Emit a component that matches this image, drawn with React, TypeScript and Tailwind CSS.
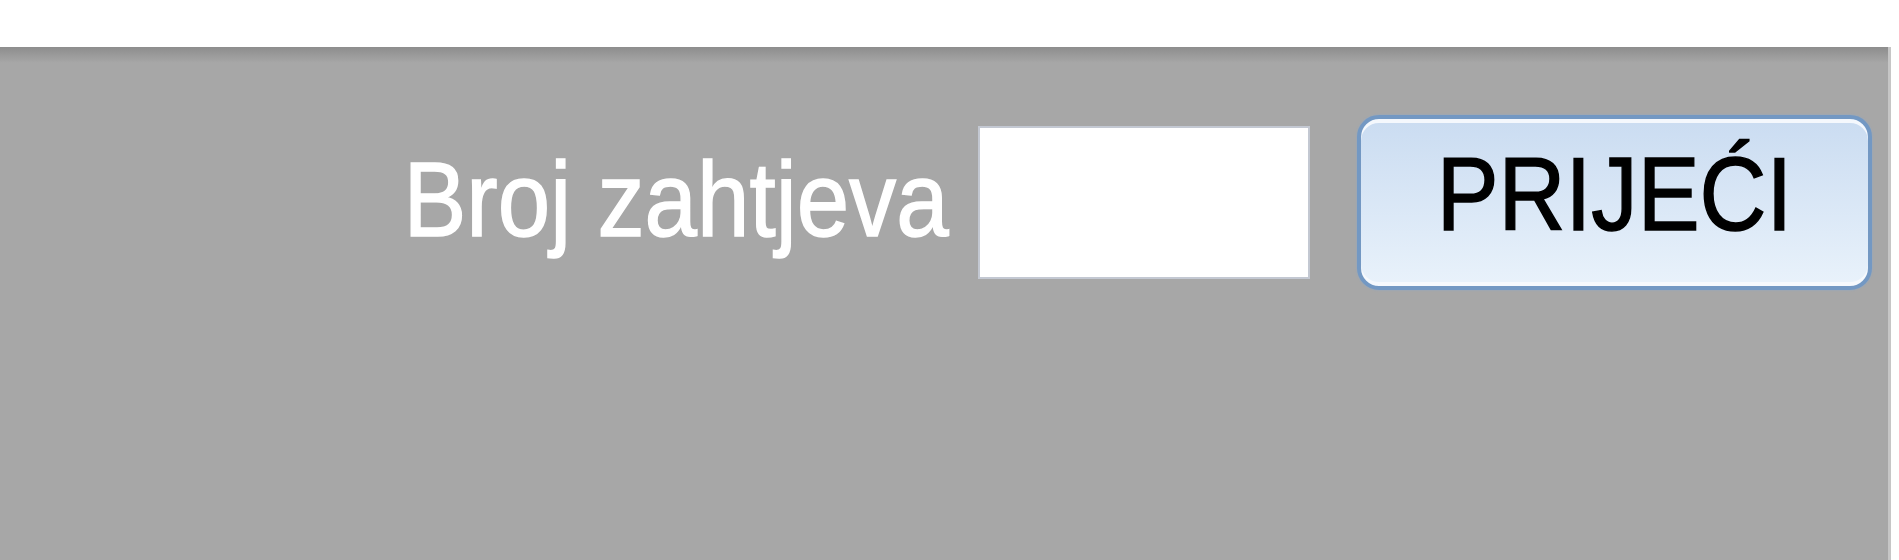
import React from "react";

export default function App() {
  return (
    <div className="w-[1899px] h-[560px] bg-white flex flex-col overflow-hidden" style={{ fontFamily: '"Liberation Sans", Arial, sans-serif' }}>
      <div className="h-[47px] bg-white shrink-0" />
      <div className="flex-1 flex">
        <div className="w-[1888px] bg-[#a7a7a7] flex flex-col">
          <div className="h-[16px] bg-gradient-to-b from-[#8d8d8d] to-[#a7a7a7]" />
          <div className="flex items-center justify-end pr-[16px] mt-[52px]">
            <span className="text-[106px] leading-none text-white mr-[29px] mb-[8px] inline-block scale-x-[0.89] origin-right whitespace-nowrap [-webkit-text-stroke:1.5px_#ffffff]">
              Broj zahtjeva
            </span>
            <div className="w-[332px] h-[153px] bg-white border-2 border-[#c3c8d2] mr-[47px]" />
            <button className="w-[515px] h-[175px] rounded-[22px] border-[4px] border-[#7398c3] bg-gradient-to-b from-[#cadcf1] to-[#e9f2fb] shadow-[inset_0_4px_0_#f4f8fd,inset_0_-4px_0_#f6f9fd,0_0_2px_#8aa9cc] flex items-center justify-center pb-[16px]">
              <span className="text-[103px] leading-none text-black inline-block scale-x-[0.9] whitespace-nowrap [-webkit-text-stroke:1.5px_#000000]">
                PRIJEĆI
              </span>
            </button>
          </div>
        </div>
        <div className="w-[3px] bg-[#c6c6c6]" />
        <div className="flex-1 bg-white" />
      </div>
    </div>
  );
}
